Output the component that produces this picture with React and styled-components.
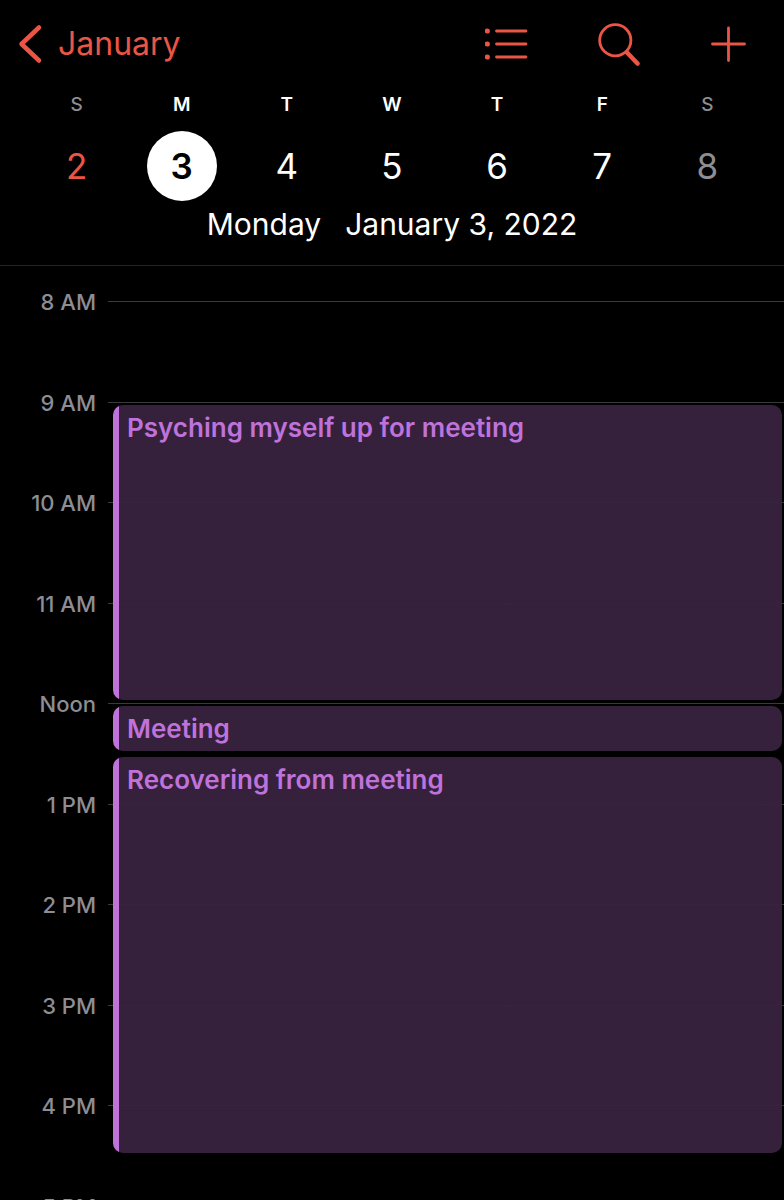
import React, { useState } from 'react';
import styled, { createGlobalStyle } from 'styled-components';

const GlobalStyle = createGlobalStyle`
  * {
    box-sizing: border-box;
  }

  body {
    margin: 0;
    background: #000;
    font-family: Inter, 'Liberation Sans', sans-serif;
  }
`;

const Page = styled.div`
  display: flex;
  flex-direction: column;
  height: 100vh;
  background: #000;
  color: #fff;
`;

const Header = styled.header`
  flex: none;
  padding-bottom: 21px;
  border-bottom: 1px solid #242426;
`;

const Navbar = styled.nav`
  display: flex;
  align-items: center;
  justify-content: space-between;
  height: 88px;
  padding: 0 33px 0 16px;
`;

const BackLink = styled.a`
  display: flex;
  align-items: center;
  gap: 14px;
  color: #eb5545;
  font-size: 32px;
  line-height: 40px;
  text-decoration: none;
`;

const Actions = styled.div`
  display: flex;
  gap: 67px;
`;

const IconButton = styled.button`
  display: flex;
  padding: 0;
  border: none;
  background: none;
  color: #eb5545;
  cursor: pointer;
`;

const Icon = styled.svg`
  display: block;
  fill: none;
  stroke: currentColor;
  stroke-linecap: round;
  stroke-linejoin: round;
`;

const Week = styled.div`
  display: grid;
  grid-template-columns: repeat(7, 1fr);
  padding: 4px 24px 0;
`;

const Day = styled.div`
  display: flex;
  flex-direction: column;
  align-items: center;
  gap: 13px;
`;

const Weekday = styled.span`
  color: ${(props) => (props.$weekend ? '#8d8d93' : '#fff')};
  font-size: 19px;
  font-weight: ${(props) => (props.$weekend ? 500 : 600)};
  line-height: 26px;
`;

const DayButton = styled.button`
  width: 70px;
  height: 70px;
  padding: 0;
  border: none;
  border-radius: 50%;
  background: ${(props) => (props.$selected ? '#fff' : 'transparent')};
  color: ${(props) => (props.$selected ? '#000' : props.$color)};
  font-family: inherit;
  font-size: 35px;
  font-weight: ${(props) => (props.$selected ? 600 : 400)};
  line-height: 68px;
  cursor: pointer;
`;

const DateTitle = styled.h1`
  display: flex;
  justify-content: center;
  gap: 24px;
  margin: 3px 0 0;
  font-size: 30px;
  font-weight: 400;
  line-height: 40px;
`;

const Timeline = styled.main`
  flex: 1;
  min-height: 0;
  overflow: hidden auto;
  scrollbar-width: none;
`;

/* two rows per hour */
const Hours = styled.div`
  display: grid;
  grid-template-columns: 108px 1fr;
  grid-auto-rows: 51px 50px 50px 50px;
  padding-top: 35px;
`;

const HourLabel = styled.span`
  grid-column: 1;
  grid-row: ${(props) => props.$row};
  margin-top: -13px;
  padding-right: 12px;
  color: #8d8d93;
  font-size: 22px;
  font-weight: 500;
  line-height: 28px;
  text-align: right;
`;

const HourLine = styled.div`
  grid-column: 2;
  grid-row: ${(props) => props.$row};
  border-top: 1px solid #3a3a3c;
`;

const Event = styled.article`
  grid-column: 2;
  grid-row: ${(props) => props.$start} / ${(props) => props.$end};
  z-index: 1;
  margin: 3px 2px 3px 5px;
  padding: 6px 14px;
  overflow: hidden;
  border-radius: 10px;
  background: linear-gradient(to right, #bf73da 6px, rgba(56, 34, 63, 0.96) 6px);
`;

const EventTitle = styled.h2`
  margin: 0;
  color: #bf73da;
  font-size: 26px;
  font-weight: 600;
  line-height: 34px;
`;

const days = [
  { letter: 'S', date: 2, color: '#eb5545', weekend: true },
  { letter: 'M', date: 3, color: '#fff' },
  { letter: 'T', date: 4, color: '#fff' },
  { letter: 'W', date: 5, color: '#fff' },
  { letter: 'T', date: 6, color: '#fff' },
  { letter: 'F', date: 7, color: '#fff' },
  { letter: 'S', date: 8, color: '#8d8d93', weekend: true },
];

const weekdayNames = ['Sunday', 'Monday', 'Tuesday', 'Wednesday', 'Thursday', 'Friday', 'Saturday'];

const hours = ['8 AM', '9 AM', '10 AM', '11 AM', 'Noon', '1 PM', '2 PM', '3 PM', '4 PM', '5 PM'];

const events = [
  { title: 'Psyching myself up for meeting', start: 3, end: 9 },
  { title: 'Meeting', start: 9, end: 10 },
  { title: 'Recovering from meeting', start: 10, end: 18 },
];

export default function App() {
  const [selected, setSelected] = useState(3);

  return (
    <Page>
      <GlobalStyle />
      <Header>
        <Navbar>
          <BackLink href="#january">
            <Icon width="28" height="44" viewBox="0 0 28 44" strokeWidth="4.5" aria-hidden="true">
              <path d="M23 5.5 5.5 22 23 38.5" />
            </Icon>
            January
          </BackLink>
          <Actions>
            <IconButton type="button" aria-label="List">
              <Icon width="44" height="44" viewBox="0 0 44 44" strokeWidth="2.8">
                <path d="M11.5 9H41M11.5 22H41M11.5 35H41" />
                <g fill="currentColor" stroke="none">
                  <circle cx="2.3" cy="9" r="2.6" />
                  <circle cx="2.3" cy="22" r="2.6" />
                  <circle cx="2.3" cy="35" r="2.6" />
                </g>
              </Icon>
            </IconButton>
            <IconButton type="button" aria-label="Search">
              <Icon width="44" height="44" viewBox="0 0 44 44" strokeWidth="2.8">
                <circle cx="19.3" cy="18.3" r="15.6" />
                <path d="M31 30.5 41.5 41.5" strokeWidth="4.5" />
              </Icon>
            </IconButton>
            <IconButton type="button" aria-label="Add">
              <Icon width="44" height="44" viewBox="0 0 44 44" strokeWidth="2.8">
                <path d="M21.5 6v32.5M5.5 22h32" />
              </Icon>
            </IconButton>
          </Actions>
        </Navbar>
        <Week>
          {days.map((day) => (
            <Day key={day.date}>
              <Weekday $weekend={day.weekend}>{day.letter}</Weekday>
              <DayButton
                type="button"
                $color={day.color}
                $selected={day.date === selected}
                onClick={() => setSelected(day.date)}
              >
                {day.date}
              </DayButton>
            </Day>
          ))}
        </Week>
        <DateTitle>
          <span>{weekdayNames[selected - 2]}</span>
          <span>January {selected}, 2022</span>
        </DateTitle>
      </Header>
      <Timeline>
        <Hours>
          {hours.map((hour, i) => (
            <React.Fragment key={hour}>
              <HourLabel $row={i * 2 + 1}>{hour}</HourLabel>
              <HourLine $row={i * 2 + 1} />
            </React.Fragment>
          ))}
          {events.map((event) => (
            <Event key={event.title} $start={event.start} $end={event.end}>
              <EventTitle>{event.title}</EventTitle>
            </Event>
          ))}
        </Hours>
      </Timeline>
    </Page>
  );
}
